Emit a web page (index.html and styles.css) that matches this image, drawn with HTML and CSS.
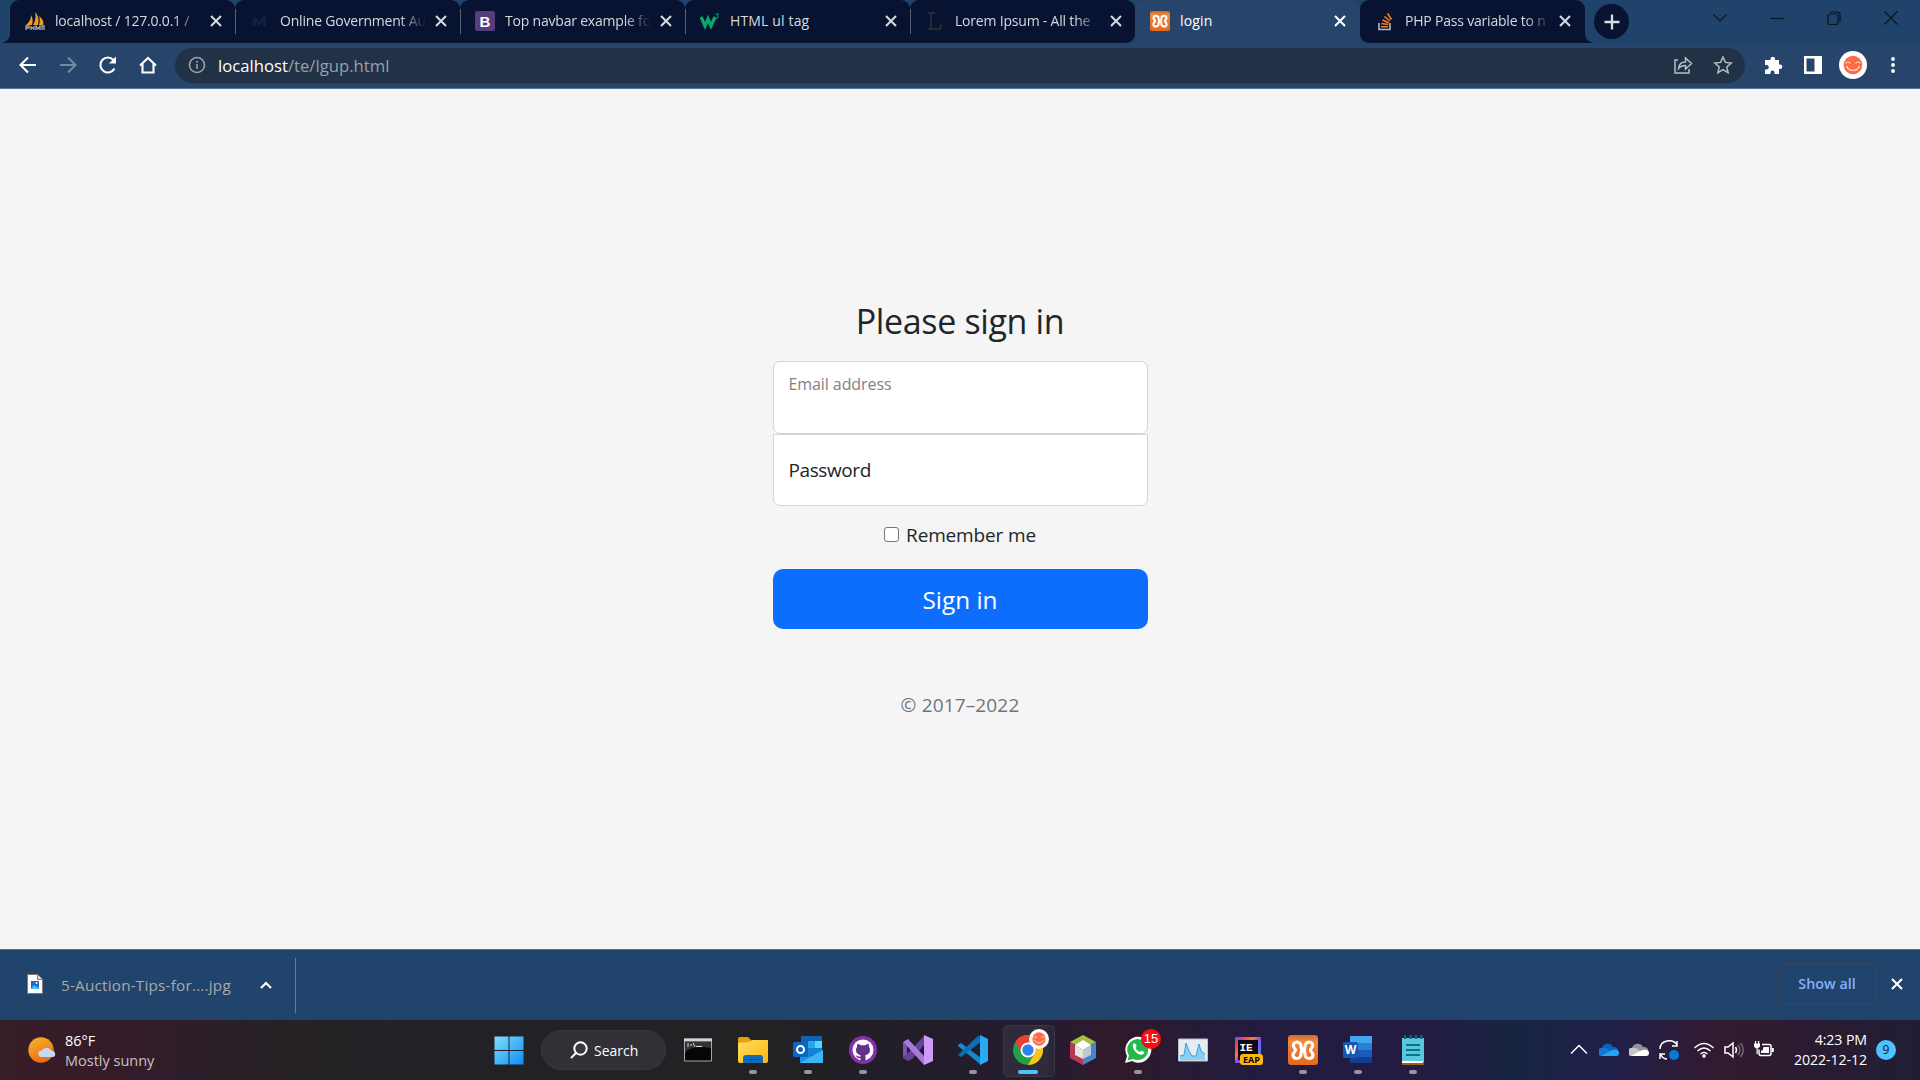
FILE: index.html
```
<!DOCTYPE html>
<html lang="en">
<head>
<meta charset="utf-8">
<title>login</title>
<link rel="stylesheet" href="styles.css">
</head>
<body>
<svg class="defs" width="0" height="0" aria-hidden="true">
  <defs>
    <symbol id="close" viewBox="0 0 20 20"><path d="M5 5l10 10M15 5L5 15" fill="none" stroke="currentColor" stroke-width="2.1"/></symbol>
    <linearGradient id="orange" x2="0" y2="1"><stop stop-color="#c9682c"/><stop offset=".2" stop-color="#f0893f"/><stop offset="1" stop-color="#e2691c"/></linearGradient>
    <symbol id="xampp" viewBox="0 0 30 30"><rect width="30" height="30" rx="3" fill="url(#orange)"/><path d="M12.500 9C10 6.300 6 6.500 5.300 10C5 13 7.600 13.500 7.600 15C7.600 16.500 4.500 18 5 20.500C6 24.500 11 24 12.500 21.500C13.200 20 13 17 13.500 15.800H16.500C17 17 16.800 20 17.500 21.500C19 24 24 24.500 25 20.500C25.500 18 22.400 16.500 22.400 15C22.400 13.500 25 13 24.700 10C24 6.500 20 6.300 17.500 9C17 10 17 13 16.500 14H13.500C13 13 13 10 12.500 9Z" fill="none" stroke="#fff" stroke-width="3.100" stroke-linejoin="round"/></symbol>
    <symbol id="face" viewBox="0 0 28 28"><circle cx="14" cy="14" r="14" fill="#fff"/><circle cx="14" cy="14" r="9.300" fill="#ff6b45"/><path d="M6.500 12.500c1.500-2 3.500-2 5 0M16.500 12.500c1.500-2 3.500-2 5 0M7.500 15c2.500 6 10.500 6 13 0" fill="none" stroke="#ffe3d9" stroke-width="1.200"/></symbol>
    <linearGradient id="win" x2="1" y2="1"><stop stop-color="#7fe0ff"/><stop offset="1" stop-color="#0c8df5"/></linearGradient>
    <linearGradient id="folder" x2="1" y2="1"><stop stop-color="#ffdc62"/><stop offset="1" stop-color="#fbb90c"/></linearGradient>
    <linearGradient id="sun" x2="0.500" y2="1"><stop stop-color="#f4b92c"/><stop offset="1" stop-color="#f06b12"/></linearGradient>
    <linearGradient id="ij" x2="1" y2="1"><stop stop-color="#147bf5"/><stop offset=".2" stop-color="#fc3d63"/><stop offset=".38" stop-color="#f9812d"/><stop offset=".5" stop-color="#8a4bf0"/><stop offset="1" stop-color="#1ba5ff"/></linearGradient>
  </defs>
</svg>

<header class="tabs">
  <div class="tab first">
    <svg class="favicon" viewBox="0 0 20 20"><path d="M1 14C5 11 6 7 6 4c2 3 2 7 1 10zM8 14c3-5 3-9 2-13 4 4 4 9 3 13zM14 14c1-3 1-6 0-9 4 3 5 6 4 9z" fill="#f59a23"/><path d="M1 19v-4h3v2H1m5 2v-4m0 2h3m0-2v4m2 0v-4l2 3 2-3v4m2 0v-4h2v4" fill="none" stroke="#aaa" stroke-width="1.300"/></svg>
    <span class="title fade">localhost / 127.0.0.1 /</span><svg class="x"><use href="#close"/></svg>
  </div>
  <div class="tab">
    <svg class="favicon" viewBox="0 0 20 20"><path d="M3 15V6h3l3 5 3-5h4v9h-3v-4l-4 4-3-4v4z" fill="#0d2440"/></svg>
    <span class="title fade">Online Government Au</span><svg class="x"><use href="#close"/></svg>
  </div>
  <div class="tab">
    <svg class="favicon" viewBox="0 0 20 20"><rect width="20" height="20" rx="2" fill="#563d7c"/><text x="10" y="15.500" text-anchor="middle" class="fav-b">B</text></svg>
    <span class="title fade">Top navbar example fo</span><svg class="x"><use href="#close"/></svg>
  </div>
  <div class="tab">
    <svg class="favicon" viewBox="0 0 20 20"><path d="M1 6l4 9 3-7 3 7 4-9" fill="none" stroke="#04aa6d" stroke-width="3.300"/><path d="M15.500 3h3l-1.500 2c2 0 2 3-1.500 2.500" fill="none" stroke="#04aa6d" stroke-width="1"/></svg>
    <span class="title wide">HTML ul tag</span><svg class="x"><use href="#close"/></svg>
  </div>
  <div class="tab nosep">
    <svg class="favicon" viewBox="0 0 20 20"><path d="M3 2h7M6 2v16M3 18h12l1-5" fill="none" stroke="#343034" stroke-width="1.500"/></svg>
    <span class="title fade">Lorem Ipsum - All the</span><svg class="x"><use href="#close"/></svg>
  </div>
  <div class="tab active">
    <svg class="favicon"><use href="#xampp"/></svg>
    <span class="title wide">login</span><svg class="x"><use href="#close"/></svg>
  </div>
  <div class="tab last nosep">
    <svg class="favicon" viewBox="0 0 20 20"><path d="M4 12v6.500h11V12" fill="none" stroke="#bcbbbb" stroke-width="1.600"/><path d="M6 15.700h7M6.300 12.500l7 1M7.300 9l6.500 2.800M9.400 5.500l5.500 4.500M12.500 2.500l4 6" stroke="#f48024" stroke-width="1.600"/></svg>
    <span class="title fade">PHP Pass variable to n</span><svg class="x"><use href="#close"/></svg>
  </div>
  <button class="newtab" aria-label="New tab"><svg width="18" height="18" viewBox="0 0 18 18"><path d="M9 1.500v15M1.500 9h15" stroke="#d9dce2" stroke-width="2.300"/></svg></button>
  <div class="window-controls">
    <svg viewBox="0 0 16 16"><path d="M1.500 4.500L8 11l6.500-6.500"/></svg>
    <svg viewBox="0 0 16 16"><path d="M1.500 8.500h13"/></svg>
    <svg viewBox="0 0 16 16"><rect x="2" y="4" width="10" height="10.500" rx="2"/><path d="M4.500 2h7q2.500 0 2.500 2.500V12"/></svg>
    <svg viewBox="0 0 16 16"><path d="M1.500 1.500l13 13M14.500 1.500l-13 13"/></svg>
  </div>
</header>

<nav class="toolbar">
  <div class="nav-buttons">
    <svg viewBox="0 0 20 20"><path d="M18 10H3M10 2.500L2.500 10l7.500 7.500"/></svg>
    <svg class="dim" viewBox="0 0 20 20"><path d="M2 10h15M10 2.500l7.500 7.500-7.500 7.500"/></svg>
    <svg viewBox="0 0 20 20"><path d="M16.500 13.500A7.500 7.500 0 1 1 15.500 5"/><path d="M18 1.500v7h-7z" class="solid"/></svg>
    <svg viewBox="0 0 20 20"><path d="M2 10.500L10 3l8 7.500M4.500 9v8.500h11V9"/></svg>
  </div>
  <div class="address">
    <svg class="info" viewBox="0 0 18 18"><circle cx="9" cy="9" r="7.500"/><path d="M9 8v5M9 5v1.800"/></svg>
    <span class="url"><b>localhost</b>/te/lgup.html</span>
    <svg class="share" viewBox="0 0 20 20"><path d="M5 5H2v13h14v-4M5.500 13.500C6 9 9 7 12.500 7V3l6 5.500-6 5.500v-3.500c-3 0-5 .500-7 3z"/></svg>
    <svg class="star" viewBox="0 0 20 20"><path d="M10 2l2.400 5.400 5.800.6-4.400 3.900 1.300 5.800L10 14.700l-5.100 3 1.300-5.800L1.800 8l5.800-.6z"/></svg>
  </div>
  <div class="extensions">
    <svg viewBox="0 0 20 20"><path d="M2 5h5.500V4a2.300 2.300 0 0 1 4.600 0v1H16v4.500h1a2.300 2.300 0 0 1 0 4.600h-1V19h-4.500v-1.500a2 2 0 0 0-4 0V19H2v-4.500h1.500a2 2 0 0 0 0-4.500H2z" fill="#fff"/></svg>
    <svg viewBox="0 0 20 20"><path d="M1 1h18v18H1zM3.500 3.500v13h8v-13z" fill="#fff" fill-rule="evenodd"/></svg>
    <svg class="avatar"><use href="#face"/></svg>
    <svg viewBox="0 0 20 20"><circle cx="10" cy="4" r="1.900" fill="#fff"/><circle cx="10" cy="10" r="1.900" fill="#fff"/><circle cx="10" cy="16" r="1.900" fill="#fff"/></svg>
  </div>
</nav>

<main class="page">
  <form class="signin">
    <h1><span>Please sign in</span></h1>
    <label class="field email"><span>Email address</span></label>
    <label class="field password"><span>Password</span></label>
    <label class="remember"><i class="checkbox"></i><span>Remember me</span></label>
    <button type="button" class="submit"><span>Sign in</span></button>
    <p class="copyright"><span>© 2017–2022</span></p>
  </form>
</main>

<section class="downloads">
  <svg class="file" viewBox="0 0 16 20"><path d="M.500.500h10l5 5v14H.500z" fill="#fff" stroke="#85776c"/><path d="M10.500.500v5h5" fill="#ddd" stroke="#85776c"/><path d="M4 7h8v8H4z" fill="#2569c6"/><path d="M4 15l3-4 2 2 1-1 2 3z" fill="#35d0f5"/><circle cx="9.500" cy="9" r="1" fill="#fff"/></svg>
  <span class="filename">5-Auction-Tips-for....jpg</span>
  <svg class="caret" viewBox="0 0 12 8"><path d="M1 7l5-5 5 5" fill="none" stroke="#fff" stroke-width="2.200"/></svg>
  <i class="divider"></i>
  <button class="showall"><span>Show all</span></button>
  <svg class="dismiss"><use href="#close"/></svg>
</section>

<footer class="taskbar">
  <div class="weather">
    <svg width="28" height="26" viewBox="0 0 28 26"><circle cx="13" cy="13" r="12.700" fill="url(#sun)"/><path d="M13.500 20a3.300 3.300 0 0 1 .5-6.600 5.500 5.500 0 0 1 9.500.4A3.200 3.200 0 0 1 25 20z" fill="#c6d9f8"/></svg>
    <div><div>86°F</div><div class="soft">Mostly sunny</div></div>
  </div>
  <div class="cell start"><svg width="30" height="30" viewBox="0 0 30 30"><path d="M.500 1.500h14v13.500H.500zM15.500 1.500h14v13.500h-14zM.500 16h14v13.500H.500zM15.500 16h14v13.500h-14z" fill="url(#win)"/></svg></div>
  <div class="search"><svg width="18" height="18" viewBox="0 0 18 18"><circle cx="10.500" cy="7.500" r="6.200" fill="#39373f"/><path d="M6 12l-5 5"/></svg><span>Search</span></div>
  <div class="apps">
    <div class="cell"><svg width="30" height="30" viewBox="0 0 30 30"><path d="M1.500 4h27v22h-27z" fill="#060606" stroke="#a4a7ac"/><path d="M1 3.500h28v3H1z" fill="#cfd2d7"/><path d="M2 7h26v6C17 11 6 12 2 18z" fill="#333436"/><path d="M4 9h2M4 11h2M8 9v2M10 8l2 4M13 11.500h6" stroke="#ddd"/></svg></div>
    <div class="cell run"><svg width="30" height="30" viewBox="0 0 30 30"><path d="M0 4q0-2 2-2h8l3 3v8H0z" fill="#e3a008"/><path d="M0 8l11-1 3-2h16v21q0 2-2 2H2q-2 0-2-2z" fill="url(#folder)"/><path d="M5 28v-5q0-3 3-3h14q3 0 3 3v5z" fill="#0f6cbd"/><path d="M9 24.500h12" stroke="#0a4a88"/></svg></div>
    <div class="cell run"><svg width="30" height="30" viewBox="0 0 30 30"><path d="M8 1h21v20H8z" fill="#0f63b5"/><path d="M15 6h7v7h-7z" fill="#28a8ea"/><path d="M22 6h7v7h-7z" fill="#50d9ff"/><path d="M15 13h14v7H15z" fill="#1682d4"/><path d="M7 15l11 6 12-6v13H7z" fill="#1a8fe3"/><path d="M7 28l23-13v13z" fill="#3bb6f2"/><rect y="7" width="15" height="15" rx="1.500" fill="#0c66c2"/><circle cx="7.500" cy="14.500" r="3.500" fill="none" stroke="#fff" stroke-width="2"/></svg></div>
    <div class="cell run"><svg width="30" height="30" viewBox="0 0 30 30"><circle cx="15" cy="15" r="14" fill="#8430aa"/><circle cx="15" cy="15" r="10.500" fill="#fff"/><path d="M9.500 8.500l3.500 1.700h4l3.500-1.700.6 3.500c2 3.500.5 7.500-3.600 8v6h-5v-3c-3 1-3.500-1-5-2.500 2-.5 2.500 2 5 1v-1.500c-4-.5-5.700-4.500-3.600-8z" fill="#65308c"/></svg></div>
    <div class="cell"><svg width="30" height="30" viewBox="0 0 30 30"><path d="M0 7l4 4v8l-4 4z" fill="#7d52b5"/><path d="M4 19l17-18v9L9 24l-4 2-5-3z" fill="#66429b"/><path d="M21 0l9 4v22l-9 4z" fill="#cf9bfa"/><path d="M0 7l5-3 16 17v9L4 11z" fill="#a67adc"/></svg></div>
    <div class="cell run"><svg width="30" height="30" viewBox="0 0 30 30"><path d="M0 10l3-2 20 15v7L0 11z" fill="#1689cf"/><path d="M0 20L21 0l2 7L3 22z" fill="#0871b6"/><path d="M22 0l8 4v22l-8 4z" fill="#29aaf2"/></svg></div>
    <div class="cell current"><svg width="50" height="50" viewBox="0 0 50 50"><circle cx="25" cy="25" r="15" fill="#22a049"/><path d="M12 17.500A15 15 0 0 1 38 17.500H25L20 29z" fill="#e94134"/><path d="M38 17.500A15 15 0 0 1 25 40l6.500-11.500-6.500-11z" fill="#fcc419"/><circle cx="25" cy="25" r="7.500" fill="#fff"/><circle cx="25" cy="25" r="5.700" fill="#3380ef"/><svg x="26" y="4" width="20" height="20"><use href="#face"/></svg></svg></div>
    <div class="cell"><svg width="30" height="32" viewBox="0 0 30 32"><path d="M15 1l13 7-13 7L2 8z" fill="#a7c044"/><path d="M2 8l13 7v16L2 24z" fill="#b73954"/><path d="M28 8l-13 7v16l13-7z" fill="#4386c9"/><path d="M15 6l8 5-8 5-8-5z" fill="#fff"/><path d="M7 11l8 5v9l-8-4z" fill="#e2e6e0"/><path d="M23 11l-8 5v9l8-4z" fill="#bfc8ce"/></svg></div>
    <div class="cell run"><svg width="30" height="30" viewBox="0 0 30 30"><path d="M2 28l2-7A13 13 0 1 1 9 26z" fill="#fff"/><path d="M4.500 25.500l1.500-5A10.500 10.500 0 1 1 10 24z" fill="#25b84c"/><path d="M10 9c2-2 3 0 3.500 2 0 1-1 1.500-1 2 1 2 2.500 3 4.500 4 1-1 1.500-1.500 2.500-1 2 1 2.500 1.500 1 3-4 3-12-4-10.500-10z" fill="#fff"/></svg><b class="badge">15</b></div>
    <div class="cell"><svg width="30" height="30" viewBox="0 0 30 30"><path d="M.500 4h29v22H.500z" fill="#e6edf1" stroke="#b9c1c8"/><path d="M2 21l4-1 2-12 3 8 3 5h4l3-12 2 7 4 3v6H2z" fill="#8bcdf3"/><path d="M2 21l4-1 2-12 3 8 3 5h4l3-12 2 7 4 3" fill="none" stroke="#3b9ddc"/></svg></div>
    <div class="cell"><svg width="30" height="30" viewBox="0 0 30 30"><path d="M2 2h26v26H2z" fill="url(#ij)"/><path d="M5 5h20v20H5z" fill="#110713"/><text x="6.500" y="15.500" class="ie">IE</text><rect x="7" y="19" width="23" height="11" rx="3" fill="#ffb612"/><text x="18.500" y="27.500" text-anchor="middle" class="eap">EAP</text></svg></div>
    <div class="cell run"><svg width="30" height="30"><use href="#xampp"/></svg></div>
    <div class="cell run"><svg width="30" height="30" viewBox="0 0 30 30"><path d="M7 1h22v7H7z" fill="#42a5ee"/><path d="M7 8h22v7H7z" fill="#2b7cd3"/><path d="M7 15h22v7H7z" fill="#185abd"/><path d="M7 22h22v6H7z" fill="#103f91"/><rect y="7" width="15" height="16" rx="1.500" fill="#1757b2"/><text x="7.500" y="19" text-anchor="middle" class="glyph">W</text></svg></div>
    <div class="cell run"><svg width="30" height="30" viewBox="0 0 30 30"><path d="M4 25h22v5H4z" fill="#a95813"/><path d="M4 3h22v23l-2 2H4z" fill="#5ac8dc"/><path d="M4 26h22l-2 2H4z" fill="#fff"/><path d="M8 10h14M8 15h14M8 20h14" stroke="#07728f" stroke-width="2"/><path d="M7 0v4M12.500 0v4M18 0v4M23.500 0v4" stroke="#126579" stroke-width="2.500"/></svg></div>
  </div>
  <div class="tray">
    <svg viewBox="0 0 20 20"><path d="M2 13.500l8-8 8 8" class="line"/></svg>
    <svg viewBox="0 0 20 20"><path d="M3 16a4 4 0 0 1 0-8 6 6 0 0 1 11-1 4.800 4.800 0 0 1 3 9z" fill="#0864b8"/><path d="M3 16a4 4 0 0 1 0-8c3-1 6 1 8 3l6 5z" fill="#1477d4"/><path d="M2 16l9-5c6-3 9 0 9 2q0 3-3 3z" fill="#2ba4ee"/></svg>
    <svg viewBox="0 0 20 20"><path d="M3 16a4 4 0 0 1 0-8 6 6 0 0 1 11-1 4.800 4.800 0 0 1 3 9z" fill="#96929a"/><path d="M3 16a4 4 0 0 1 0-8c3-1 6 1 8 3l6 5z" fill="#c5c3c9"/><path d="M2 16l9-5c6-3 9 0 9 2q0 3-3 3z" fill="#fff"/></svg>
    <svg viewBox="0 0 20 20"><path d="M1 9C1 0 14-2 18 5M18 1v5h-5M8 19c-3 0-5-2-6-4M1 19v-5h5" class="line"/><circle cx="15" cy="15" r="5" fill="#087bd8"/></svg>
    <svg class="wifi" viewBox="0 0 20 20"><path d="M.500 8Q10-1 19.500 8M3.500 11Q10 5 16.500 11M6.500 14Q10 11 13.500 14" class="line"/><circle cx="10" cy="16" r="1.800" fill="#fff"/></svg>
    <svg viewBox="0 0 20 20"><path d="M1 7h3l5-4v14l-5-4H1zM11.500 7q2 3 0 6" class="line"/><path d="M14 5q4 5 0 10M16.500 3q5.500 7 0 14" class="faint"/></svg>
    <svg viewBox="0 0 20 20"><path d="M8 4.500h7q2 0 2 2v7q0 2-2 2H7q-2 0-2-2v-4" class="line"/><path d="M9.500 7H15v6H7v-2q2.500-1 2.500-4zM0 3.500h6v3q-3 4-6 0zM1 1h1.200v3H1zM4 1h1.200v3H4zM2.500 7h1.200v7H2.500zM18 8h1.800v4H18z" fill="#fff"/></svg>
    <div class="clock"><div>4:23 PM</div><div>2022-12-12</div></div>
    <b class="notifications">9</b>
  </div>
</footer>
</body>
</html>
```
FILE: styles.css
```
* { box-sizing: border-box; }
body {
  margin: 0;
  width: 1920px;
  height: 1080px;
  overflow: hidden;
  display: flex;
  flex-direction: column;
  font-family: "Open Sans", "Noto Sans", sans-serif;
  font-size: 14px;
}
svg { display: block; flex: none; }
.defs { position: absolute; }
button { font: inherit; padding: 0; border: 0; }

/* Tab strip */
.tabs { display: flex; height: 43px; padding-left: 10px; background: #20436b; }
.tab {
  position: relative;
  width: 225px;
  height: 43px;
  padding: 0 9px 2px 15px;
  display: flex;
  align-items: center;
  background: #081231;
  border-radius: 9px 9px 0 0;
  color: #d7d9de;
}
.tab::after {
  content: "";
  position: absolute;
  z-index: 1;
  right: -1px;
  top: 9px;
  width: 1px;
  height: 25px;
  background: #566079;
}
.tab.active::after, .nosep::after { display: none; }
.tab.active { background: #27446b; color: #fff; }
.tab.nosep { border-radius: 9px 9px 9px 0; }
.tab.last { border-radius: 9px 9px 0 9px; }
.tab.first::before, .tab.last::before {
  content: "";
  position: absolute;
  bottom: 0;
  left: -9px;
  width: 9px;
  height: 9px;
  background: radial-gradient(circle at 0 0, transparent 8.5px, #081231 9px);
}
.tab.last::before { left: 225px; background: radial-gradient(circle at 100% 0, transparent 8.5px, #081231 9px); }
.favicon { width: 20px; height: 20px; margin-right: 10px; }
.fav-b { font: bold 15px "Liberation Sans", sans-serif; fill: #fff; }
.title { width: 146px; overflow: hidden; white-space: nowrap; letter-spacing: -.2px; line-height: 24px; }
.title.wide { letter-spacing: .15px; }
.fade { -webkit-mask-image: linear-gradient(90deg, #000 120px, transparent 146px); mask-image: linear-gradient(90deg, #000 120px, transparent 146px); }
.x { width: 20px; height: 20px; margin-left: 5px; }
.active .x, .last .x { margin-left: 4px; }
.newtab {
  width: 35px; height: 35px;
  margin: 4px 0 0 9px;
  display: grid;
  place-items: center;
  border-radius: 50%;
  background: #081231;
}
.window-controls { display: flex; gap: 41px; margin: 10px 21px 0 auto; }
.window-controls svg { width: 16px; height: 16px; fill: none; stroke: #091321; stroke-width: 1.2; }

/* Toolbar */
.toolbar {
  height: 46px;
  padding-bottom: 1px;
  display: flex;
  align-items: center;
  background: #27446b;
  border-bottom: 1px solid #55779a;
}
.nav-buttons { width: 175px; padding-left: 18px; display: flex; gap: 20px; }
.nav-buttons svg { width: 20px; height: 20px; fill: none; stroke: #fff; stroke-width: 2.1; }
.nav-buttons .dim { stroke: #7489a3; }
.nav-buttons .solid { fill: #fff; stroke: none; }
.address {
  width: 1570px;
  height: 35px;
  padding: 0 13px;
  display: flex;
  align-items: center;
  border-radius: 18px;
  background: #213146;
}
.info { width: 18px; height: 18px; fill: none; stroke: #9aa3ae; stroke-width: 1.6; }
.url { margin-left: 12px; flex: 1; font-size: 16.7px; color: #96a0ab; }
.url b { font-weight: 400; color: #fff; }
.share, .star { width: 20px; height: 20px; fill: none; stroke: #b7bdc5; stroke-width: 1.5; margin-left: 20px; }
.share { margin-left: 0; }
.star { margin-right: -1px; }
.extensions { display: flex; flex: 1; align-items: center; padding-left: 18px; gap: 20px; }
.extensions svg { width: 20px; height: 20px; }
.extensions .avatar { width: 28px; height: 28px; margin: 0 -4px; }

/* Sign-in page */
.page { height: 860px; display: flex; justify-content: center; background: #f5f5f5; color: #212529; font-size: 19px; }
.signin { width: 375px; padding-top: 210px; text-align: center; display: flex; flex-direction: column; }
h1 { margin: 0; height: 62px; font-size: 34px; line-height: 44px; font-weight: 400; letter-spacing: -.35px; }
.field { height: 73px; padding: 0 15px; display: flex; align-items: center; background: #fff; border: 1px solid #ced4da; border-radius: 7px; }
.email { padding-bottom: 27px; font-size: 16px; letter-spacing: -.08px; color: #808284; }
.password { height: 72px; border-radius: 0 0 7px 7px; letter-spacing: -.4px; }
.remember { height: 63px; display: flex; align-items: center; justify-content: center; padding-bottom: 5px; letter-spacing: -.15px; }
.checkbox { width: 15px; height: 15px; border: 1px solid #767676; border-radius: 3px; background: #fff; margin: 0 7px 2px 0; }
.submit { height: 60px; border-radius: 10px; background: #0d6efd; color: #fff; font-size: 24.3px; }
.copyright { margin: 62px 0 0; line-height: 28px; color: #6c757d; letter-spacing: .15px; }

/* Downloads shelf */
.downloads { height: 71px; display: flex; align-items: center; padding-left: 27px; background: #20446b; border-top: 1px solid #55708e; color: #aaa9a9; }
.file { width: 16px; height: 20px; margin-bottom: 2px; }
.filename { width: 199px; margin-left: 18px; font-size: 15.3px; letter-spacing: .2px; }
.caret { width: 12px; height: 8px; }
.divider { width: 1px; height: 55px; margin-left: 23px; background: #617d9a; }
.showall { width: 98px; height: 40px; margin: 0 11px 2px auto; padding-bottom: 2px; border: 1px solid #3a4655; border-radius: 5px; background: none; color: #82b1ff; font-weight: 600; font-size: 14.3px; }
.dismiss { width: 20px; height: 20px; margin: 0 13px 2px 0; color: #fff; stroke-width: 2.5; }

/* Taskbar */
.taskbar {
  height: 60px;
  display: flex;
  align-items: center;
  color: #fff;
  background: linear-gradient(90deg, #371d25 0, #351b29 130px, #2c1e29 190px, #252124 300px, #222226 420px, #222124 780px, #231d2a 930px, #251c32 1040px, #30192a 1115px, #271b35 1180px, #231b40 1260px, #231b42 1420px, #172440 1510px, #20204a 1610px, #331a30 1720px, #291c30 1820px, #201e36 1920px);
}
.weather { width: 481px; padding-left: 28px; display: flex; align-items: center; gap: 9px; line-height: 20px; font-size: 14.5px; }
.weather > div { padding-top: 1px; }
.soft { color: #c9c2c7; }
.cell { position: relative; width: 55px; height: 60px; display: grid; place-items: center; }
.search { width: 125px; height: 40px; margin: 0 4px 0 5px; padding-left: 28px; display: flex; align-items: center; gap: 6px; border-radius: 20px; border: 1px solid #3a383e; background: #323036; }
.search svg { stroke: #fff; stroke-width: 2; }
.apps { display: flex; }
.run::after, .current::after { content: ""; position: absolute; left: 24px; bottom: 6px; width: 8px; height: 4px; border-radius: 2px; background: #98949c; }
.current::after { left: 18px; width: 20px; background: #4cc2ff; }
.current::before { content: ""; position: absolute; left: 3px; top: 5px; width: 50px; height: 50px; border-radius: 5px; border: 1px solid #3c3848; box-shadow: inset -5px 0 #2b2739; background: #2f2b3b; }
.current svg { position: relative; }
.badge { position: absolute; left: 31px; top: 9px; width: 20px; height: 20px; border-radius: 50%; background: #f80d12; font: 13px/20px "Liberation Sans", sans-serif; text-align: center; }
.glyph { font: bold 12px "Open Sans", sans-serif; fill: #fff; }
.ie { font: bold 11px "Liberation Mono", monospace; fill: #fff; }
.eap { font: bold 9px "Open Sans", sans-serif; fill: #000; }
.tray { flex: 1; padding-left: 129px; display: flex; align-items: center; gap: 10px; }
.tray svg { width: 20px; height: 20px; }
.tray .wifi { margin-left: 5px; }
.line { fill: none; stroke: #fff; stroke-width: 1.5; }
.faint { fill: none; stroke: #77707c; stroke-width: 1.3; }
.clock { width: 83px; text-align: right; line-height: 20px; font-size: 14.2px; letter-spacing: -.1px; white-space: nowrap; }
.notifications { width: 20px; height: 20px; margin-left: -1px; border-radius: 50%; background: #4cc2ff; color: #101820; font-weight: 400; font-size: 12px; line-height: 20px; text-align: center; }
```
